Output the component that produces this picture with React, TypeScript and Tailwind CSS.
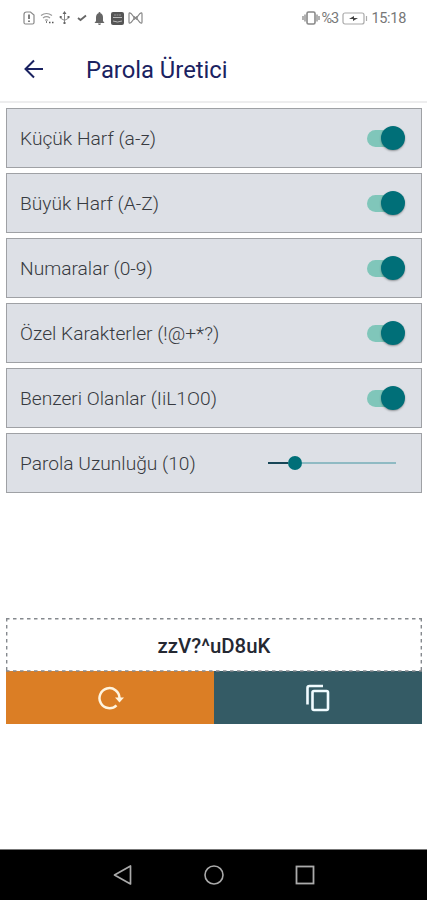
import React from "react";

const options = [
  "Küçük Harf (a-z)",
  "Büyük Harf (A-Z)",
  "Numaralar (0-9)",
  "Özel Karakterler (!@+*?)",
  "Benzeri Olanlar (IiL1O0)",
];

function StatusBar() {
  return (
    <div className="flex h-9 items-center justify-between pl-[23px] pr-[21px] text-[#777]">
      <div className="flex items-center gap-[4px]">
        <svg width="12" height="14" viewBox="0 0 12 14" fill="none" stroke="#888" strokeWidth="1.2">
          <path d="M3.5 1h4L11 4v7.5Q11 13 9.500 13H2.500Q1 13 1 11.500V3.500Q1 1 3.500 1Z" />
          <path d="M6 3.500v4.500M6 9.500v1.500" stroke="#555" strokeWidth="1.500" />
        </svg>
        <svg className="ml-px" width="14" height="14" viewBox="0 0 14 14" fill="none" stroke="#999" strokeWidth="1.200">
          <path d="M1 4.500q5.500-4 11 0M3 7q3.500-2.600 7 0M5 9.300q1.500-1 3 0" />
          <path d="M6 11h1M9 11.500h1.500M12 11.500h1.500" stroke="#555" strokeWidth="1.500" />
        </svg>
        <svg className="ml-[1px]" width="11" height="14" viewBox="0 0 11 14" fill="none" stroke="#888" strokeWidth="1">
          <path d="M5.500 2v9M1.500 5.500v1.700l4 2.200 4-2.200V5" />
          <path d="m5.500 0 2 3h-4zM4.500 11h2v2h-2zM.7 5h2v2h-2zM8.500 5h2v2h-2z" fill="#666" stroke="none" />
        </svg>
        <svg className="ml-[3px]" width="10" height="12" viewBox="0 0 10 12" fill="none" stroke="#666" strokeWidth="1.800">
          <path d="m1 6 2.500 2L9 3.500" />
        </svg>
        <svg className="ml-[3px]" width="11" height="13" viewBox="0 0 11 13" fill="#666">
          <path d="M5.500 0q1 0 1 1.200Q9 2 9 5.500V9l1.500 2H.5L2 9V5.500Q2 2 4.500 1.200 4.500 0 5.500 0ZM4 11.500h3Q6.800 13 5.500 13T4 11.500Z" />
        </svg>
        <svg className="ml-[2px]" width="13" height="13" viewBox="0 0 13 13">
          <rect width="13" height="13" rx="2" fill="#555" />
          <path d="M2 5.500h9M2 9q4.500 2 9 0" stroke="#bbb" strokeWidth="1" fill="none" />
          <path d="M3 3h7" stroke="#999" strokeDasharray="2 .5" />
        </svg>
        <svg width="15" height="12" viewBox="0 0 15 12" fill="none" stroke="#888" strokeWidth="1.200">
          <path d="M1 10V2q0-2 2-.5L5.800 5v2L3 10.500Q1 12 1 10ZM14 2v8q0 2-2 .5L9.200 7V5L12 1.500Q14 0 14 2ZM6 4.500 9 7.500M9 4.500 6 7.500" />
        </svg>
      </div>
      <div className="flex items-center text-[14.5px] leading-4 tracking-[-0.3px]">
        <svg width="18" height="14" viewBox="0 0 18 14" fill="none" stroke="#888" strokeWidth="1.300">
          <rect x="5" y="1" width="8" height="12" rx="1.500" strokeWidth="1.600" />
          <path d="M1 5v4M3 3.500v7M15 3.500v7M17 5v4" />
        </svg>
        <span className="ml-px w-[21px] pt-px text-[14.5px] tracking-[-1px]">%3</span>
        <svg className="mr-[3px]" width="26" height="13" viewBox="0 0 26 13" fill="none" stroke="#aaa" strokeWidth="1.200">
          <rect x="1" y="1" width="21" height="11" rx="2" />
          <path d="M24.500 4v5" />
          <path d="m7 7 5-3v2h4l-5 3V7Z" fill="#444" stroke="none" />
        </svg>
        <span className="pt-px">15:18</span>
      </div>
    </div>
  );
}

function Switch() {
  return (
    <div className="relative mr-[16px] h-6 w-[38px]">
      <div className="absolute left-0 top-1 h-[17px] w-8 rounded-full bg-[#80c6ba]" />
      <div className="absolute right-0 top-0 size-6 rounded-full bg-[#006f78] shadow-[0_1px_2px_rgba(0,0,0,0.35)]" />
    </div>
  );
}

function Row({ label, children }: { label: string; children: React.ReactNode }) {
  return (
    <div className="flex h-[60px] items-center justify-between border-[1.5px] border-[#9fa1a5] bg-[#dde0e6] pl-[13px]">
      <span className="pt-[2px] text-[19.2px] font-light text-[#373a40]">{label}</span>
      {children}
    </div>
  );
}

export default function App() {
  return (
    <div className="flex h-[900px] w-[427px] flex-col bg-white font-['Roboto',sans-serif]">
      <StatusBar />
      <header className="flex h-[67px] items-center border-b-2 border-[#ededee] pl-[24px] text-[#1a2261]">
        <svg width="20" height="20" viewBox="0 0 20 20" fill="none" stroke="currentColor" strokeWidth="2">
          <path d="M19 10H2M10 1.500 1.500 10l8.500 8.500" />
        </svg>
        <h1 className="ml-[42px] pt-[5px] text-[23.8px]">Parola Üretici</h1>
      </header>
      <main className="flex flex-1 flex-col pl-[6px] pr-[5px] pt-[5px]">
        <div className="flex flex-col gap-[5px]">
          {options.map((label) => (
            <Row key={label} label={label}>
              <Switch />
            </Row>
          ))}
          <Row label="Parola Uzunluğu (10)">
            <div className="mr-[25px] flex w-[128px] items-center">
              <div className="h-[2px] w-[20px] bg-[#174657]" />
              <div className="size-[14px] rounded-full bg-[#006f78]" />
              <div className="h-[2px] flex-1 bg-[#8fbac3]" />
            </div>
          </Row>
        </div>
        <section className="mt-[125px]">
          <div className="relative flex h-[53px] items-center justify-center">
            <svg className="absolute inset-0" width="416" height="54" fill="none" stroke="#85898e" strokeWidth="1.400" strokeDasharray="3.500 3.500">
              <path d="M0 .7h416M.7 0v53M415.300 0v53M0 53h416" />
            </svg>
            <span className="pt-[4px] text-[20.4px] font-medium text-[#252832]">zzV?^uD8uK</span>
          </div>
          <div className="flex h-[53px]">
            <button className="flex w-[208px] items-center justify-center bg-[#db7e25]" aria-label="Yenile">
              <svg width="27" height="26" viewBox="0 0 27 26" fill="none" stroke="#fff4df" strokeWidth="2.500">
                <path d="M19.500 20.300A10 10 0 1 1 22.500 13" />
                <path d="M18 12.500h9l-4.500 5Z" fill="#fff4df" stroke="none" />
              </svg>
            </button>
            <button className="flex flex-1 items-center justify-center bg-[#345b65]" aria-label="Kopyala">
              <svg width="24" height="28" viewBox="0 0 24 28" fill="none" stroke="#f0fbff" strokeWidth="2.600">
                <path d="M1.500 20.500V4Q1.500 2 3.500 2H17" />
                <rect x="6.500" y="7" width="15.500" height="19" rx="1.500" />
              </svg>
            </button>
          </div>
        </section>
      </main>
      <nav className="flex h-[51px] items-center gap-[72px] border-t border-[#777] bg-black pl-[113px]">
        <svg width="20" height="22" viewBox="0 0 20 22" fill="none" stroke="#aaa" strokeWidth="1.700" strokeLinejoin="round">
          <path d="M17.500 2v18L1.500 11Z" />
        </svg>
        <svg className="-ml-[2px]" width="22" height="22" viewBox="0 0 22 22" fill="none" stroke="#aaa" strokeWidth="1.600">
          <circle cx="11" cy="11" r="9" />
        </svg>
        <svg className="-ml-[2px]" width="20" height="20" viewBox="0 0 20 20" fill="none" stroke="#aaa" strokeWidth="1.800">
          <rect x="1.500" y="1.500" width="17" height="17" />
        </svg>
      </nav>
    </div>
  );
}
